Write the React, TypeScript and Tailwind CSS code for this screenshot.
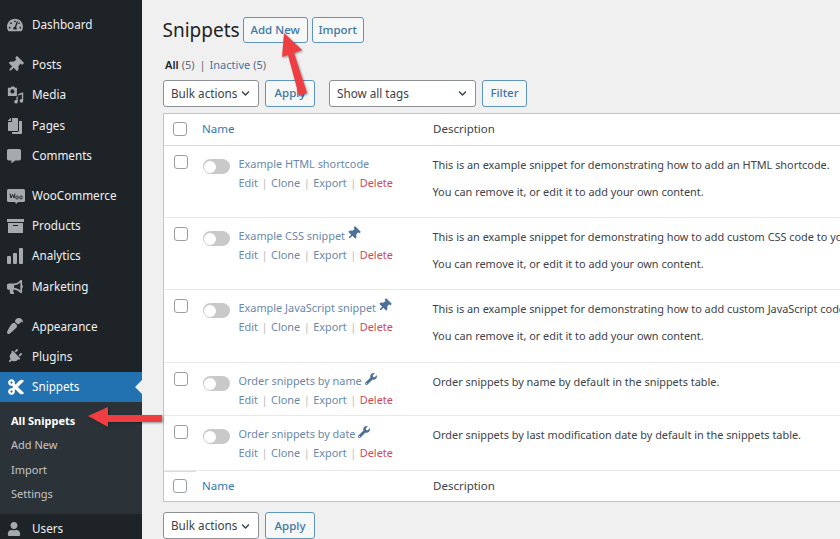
import React from "react";
import { FaThumbtack, FaWrench, FaUser, FaPlug, FaCut, FaTachometerAlt, FaCommentAlt, FaPaintBrush, FaBullhorn, FaCopy, FaChevronDown } from "react-icons/fa";

const ic = "text-[#a7aaad]";
const Media = () => (
  <svg width="18" height="18" viewBox="0 0 20 20" fill="#a7aaad"><path d="M1 2h3l1-1.500h3l1 1.500h2v9H1z" /><circle cx="6" cy="6" r="2.300" fill="#1d2327" /><path d="M18 7v9.500a2 2 0 1 1-1.500-1.900V9.500L12 10.500v7a2 2 0 1 1-1.500-1.900V12h2V9z" /></svg>
);
const Woo = () => (
  <svg width="18" height="16" viewBox="0 0 18 16"><path d="M1.500 1h15A1.500 1.500 0 0 1 18 2.500v10a1.500 1.500 0 0 1-1.500 1.500H11l-2 2-1-2H1.500A1.500 1.500 0 0 1 0 12.500v-10A1.500 1.500 0 0 1 1.500 1z" fill="#a7aaad" /><path d="M3 5.500l1 4.500 1.500-3.500L7 10l1-4.500M10 7.800a1.200 1.700 0 1 0 .01 0M14 7.800a1.200 1.700 0 1 0 .01 0" stroke="#1d2327" strokeWidth="1" fill="none" /></svg>
);
const Box = () => (
  <svg width="17" height="14" viewBox="0 0 17 14" fill="#a7aaad"><rect x="0" y="0" width="17" height="3" /><path d="M1 4h15v10H1z" /><rect x="6" y="6" width="5" height="1" fill="#1d2327" /></svg>
);
const Bars = () => (
  <svg width="16" height="16" viewBox="0 0 16 16" fill="#a7aaad"><rect x="0" y="8" width="4" height="8" rx="1" /><rect x="6" y="5" width="4" height="11" rx="1" /><rect x="12" y="0" width="4" height="16" rx="1" /></svg>
);

const groups: { icon: React.ReactNode; label: string }[][] = [
  [{ icon: <FaTachometerAlt size={16} className={ic} />, label: "Dashboard" }],
  [
    { icon: <FaThumbtack size={16} className={`${ic} rotate-45`} />, label: "Posts" },
    { icon: <Media />, label: "Media" },
    { icon: <FaCopy size={16} className={`${ic} -scale-x-100`} />, label: "Pages" },
    { icon: <FaCommentAlt size={14} className={ic} />, label: "Comments" },
  ],
  [
    { icon: <Woo />, label: "WooCommerce" },
    { icon: <Box />, label: "Products" },
    { icon: <Bars />, label: "Analytics" },
    { icon: <FaBullhorn size={16} className={ic} />, label: "Marketing" },
  ],
  [
    { icon: <FaPaintBrush size={16} className={`${ic} rotate-180`} />, label: "Appearance" },
    { icon: <FaPlug size={15} className={`${ic} rotate-45`} />, label: "Plugins" },
  ],
];

const MenuRow = ({ icon, label }: { icon: React.ReactNode; label: string }) => (
  <div className="flex items-center h-[30.3px] text-[#f0f0f1] text-[11.7px]">
    <span className="w-[32px] pl-[7px] flex justify-start items-center shrink-0">{icon}</span>
    {label}
  </div>
);

const Checkbox = () => (
  <span className="block w-[14px] h-[14px] rounded-[3px] border border-[#9a9da1] bg-white" />
);

const Toggle = () => (
  <span className="flex items-center w-[27px] h-[15px] rounded-full bg-[#c9c9c9] pl-[1px]">
    <span className="block w-[12px] h-[12px] rounded-full bg-white" />
  </span>
);

const Pin = () => <FaThumbtack size={13} className="text-[#4d6f9c] rotate-45 -mt-[5px] -ml-[2px]" />;
const Wrench = () => <FaWrench size={12} className="text-[#4d6f9c] -mt-[5px] -ml-[1px]" />;

const Sep = () => <span className="text-[#b9bcc0] mx-[3.500px]">|</span>;

const rows = [
  { h: "h-[72px]", title: "Example HTML shortcode", mark: null, d1: "This is an example snippet for demonstrating how to add an HTML shortcode.", d2: "You can remove it, or edit it to add your own content." },
  { h: "h-[72px]", title: "Example CSS snippet", mark: <Pin />, d1: "This is an example snippet for demonstrating how to add custom CSS code to your website.", d2: "You can remove it, or edit it to add your own content." },
  { h: "h-[73px]", title: "Example JavaScript snippet", mark: <Pin />, d1: "This is an example snippet for demonstrating how to add custom JavaScript code to your website.", d2: "You can remove it, or edit it to add your own content." },
  { h: "h-[53px]", title: "Order snippets by name", mark: <Wrench />, d1: "Order snippets by name by default in the snippets table.", d2: "" },
  { h: "h-[55px]", title: "Order snippets by date", mark: <Wrench />, d1: "Order snippets by last modification date by default in the snippets table.", d2: "" },
];

const Outline = ({ children, cls = "" }: { children: React.ReactNode; cls?: string }) => (
  <span className={`flex items-center justify-center shrink-0 h-[26px] rounded-[3px] border border-[#5f94bd] bg-[#f6f7f7] text-[#3f76a6] text-[11.5px] font-medium ${cls}`}>{children}</span>
);

const SelectBox = ({ label, cls }: { label: string; cls: string }) => (
  <span className={`flex items-center justify-between shrink-0 whitespace-nowrap h-[27px] rounded-[3px] border border-[#8c8f94] bg-white text-[#3c434a] text-[11.7px] pl-[7px] pr-[8px] pt-[1px] ${cls}`}>
    {label}
    <FaChevronDown size={9} className="text-[#3c434a]" />
  </span>
);

export default function App() {
  return (
    <div className="flex w-[840px] h-[539px] overflow-hidden relative bg-[#f0f0f1] font-['Noto_Sans','Open_Sans',sans-serif]">
      <aside className="w-[142px] shrink-0 h-full bg-[#1d2327] pt-[10px] overflow-hidden">
        {groups.map((g, i) => (
          <div key={i} className={i < 3 ? "mb-[9.500px]" : ""}>
            {g.map((it) => <MenuRow key={it.label} {...it} />)}
          </div>
        ))}
        <div className="relative bg-[#2271b1] text-white text-[11.7px] flex items-center h-[30px]">
          <span className="w-[32px] pl-[7px] flex items-center"><FaCut size={18} /></span>
          Snippets
          <span className="absolute right-0 top-[8px] border-y-[7px] border-y-transparent border-r-[7px] border-r-[#f0f0f1]" />
        </div>
        <div className="bg-[#2c3338] h-[112px] pt-[7px] text-[11px] text-[#c3c4c7] pl-[11px]">
          <div className="h-[24.500px] flex items-center font-bold text-white">All Snippets</div>
          <div className="h-[24.500px] flex items-center">Add New</div>
          <div className="h-[24.500px] flex items-center">Import</div>
          <div className="h-[24.500px] flex items-center">Settings</div>
        </div>
        <MenuRow icon={<FaUser size={14} className={ic} />} label="Users" />
      </aside>

      <main className="flex-1 min-w-0 pl-[21px] pt-[17px]">
        <div className="flex items-center h-[26px]">
          <h1 className="text-[19px] text-[#1d2327] leading-none -ml-[0.500px]">Snippets</h1>
          <Outline cls="w-[65px] ml-[3px]">Add New</Outline>
          <Outline cls="w-[52px] ml-[4px]">Import</Outline>
        </div>
        <div className="mt-[12px] h-[20px] flex items-center text-[11px] text-[#646970] pl-[2px]">
          <span className="font-semibold text-[#1d2327]">All</span><span className="ml-[3px]">(5)</span>
          <span className="mx-[5px]">|</span>
          <span className="text-[#3f76a6] -ml-[1px]">Inactive</span><span className="ml-[3px]">(5)</span>
        </div>
        <div className="flex items-center mt-[4px] h-[28px]">
          <SelectBox label="Bulk actions" cls="w-[96px]" />
          <Outline cls="w-[50px] ml-[6px] h-[27px]">Apply</Outline>
          <SelectBox label="Show all tags" cls="w-[147px] ml-[14px]" />
          <Outline cls="w-[45px] ml-[6px] h-[27px]">Filter</Outline>
        </div>
        <div className="mt-[6px] w-[720px] border border-[#c3c4c7] bg-white">
          <div className="flex items-center h-[32px] pb-[2px] border-b border-[#dcdcde] text-[11.500px]">
            <span className="w-[38px] pl-[9px] shrink-0"><Checkbox /></span>
            <span className="w-[231px] shrink-0 text-[#2f7ab5]">Name</span>
            <span className="text-[#3c434a]">Description</span>
          </div>
          {rows.map((r) => (
            <div key={r.title} className={`flex items-start ${r.h} border-b border-[#e8e8e8] last:border-b-0 pt-[8px] text-[10.900px]`}>
              <span className="w-[39px] pl-[10px] pt-[1px] shrink-0"><Checkbox /></span>
              <span className="pt-[5px] w-[35.500px] shrink-0"><Toggle /></span>
              <div className="w-[194px] shrink-0">
                <div className="flex items-center gap-[4px] text-[#6a88ab] h-[20px] whitespace-nowrap">{r.title}{r.mark}</div>
                <div className="h-[18px] flex items-center text-[#6a88ab] whitespace-nowrap">Edit<Sep />Clone<Sep />Export<Sep /><span className="text-[#cf4a55]">Delete</span></div>
              </div>
              <div className="text-[#3c434a] whitespace-nowrap pt-[1px]">
                <div className="h-[20px] flex items-center">{r.d1}</div>
                {r.d2 && <div className="h-[20px] flex items-center mt-[7px]">{r.d2}</div>}
              </div>
            </div>
          ))}
          <div className="relative flex items-center h-[30px] text-[11.500px]">
            <span className="absolute left-0 top-0 w-[32px] border-t border-[#dcdcde]" />
            <span className="w-[38px] pl-[9px] shrink-0"><Checkbox /></span>
            <span className="w-[231px] shrink-0 text-[#2f7ab5]">Name</span>
            <span className="text-[#3c434a]">Description</span>
          </div>
        </div>
        <div className="flex items-center mt-[10px]">
          <SelectBox label="Bulk actions" cls="w-[96px]" />
          <Outline cls="w-[50px] ml-[6px] h-[27px]">Apply</Outline>
        </div>
      </main>

      <svg className="absolute left-0 top-0 pointer-events-none drop-shadow-[1px_1px_1px_rgba(0,0,0,0.4)]" width="840" height="539" viewBox="0 0 840 539">
        <path d="M284 33 L302 50 L294 53 L307 93 L299 96 L288 55 L282 57 Z" fill="#ef3e42" />
        <path d="M88 416 L108 407 L108 415 L162 415 L162 422 L108 422 L108 427 Z" fill="#ef3e42" />
      </svg>
    </div>
  );
}
